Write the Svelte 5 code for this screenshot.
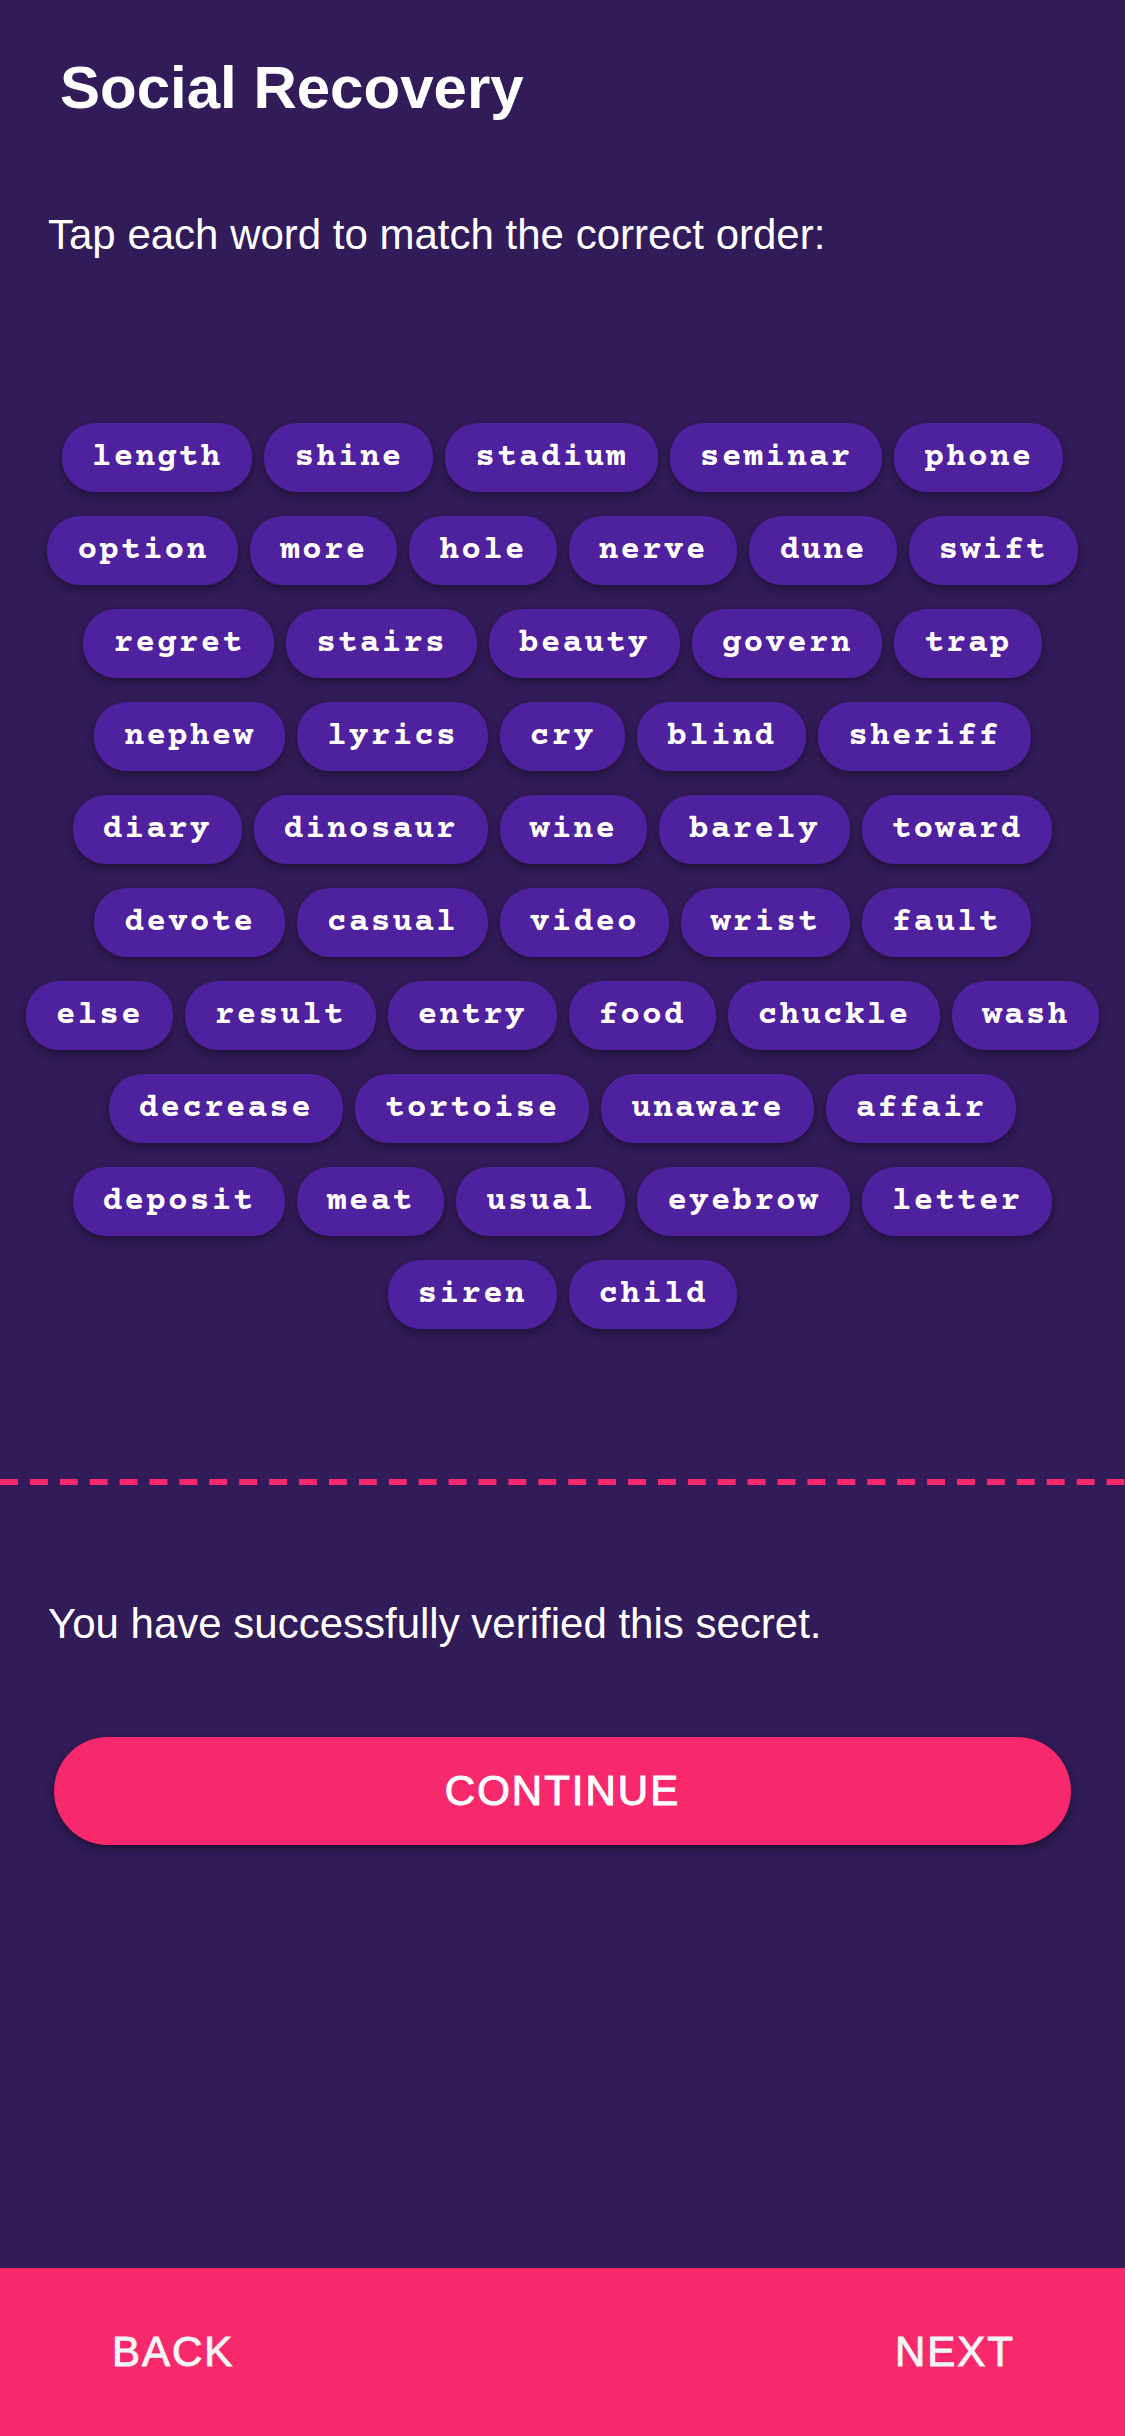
<script>
  const words = (
    'length shine stadium seminar phone option more hole nerve dune swift ' +
    'regret stairs beauty govern trap nephew lyrics cry blind sheriff ' +
    'diary dinosaur wine barely toward devote casual video wrist fault ' +
    'else result entry food chuckle wash decrease tortoise unaware affair ' +
    'deposit meat usual eyebrow letter siren child'
  ).split(' ');
</script>

<div class="screen">
  <header>
    <h1>Social Recovery</h1>
  </header>

  <main>
    <p>Tap each word to match the correct order:</p>

    <div class="words">
      {#each words as word}
        <button type="button" class="word">{word}</button>
      {/each}
    </div>

    <div class="divider" role="separator"></div>

    <p>You have successfully verified this secret.</p>

    <button type="button" class="continue">CONTINUE</button>
  </main>

  <footer>
    <button type="button" class="nav">BACK</button>
    <button type="button" class="nav">NEXT</button>
  </footer>
</div>

<style>
  :global(body) {
    margin: 0;
    background: #311b58;
  }

  .screen {
    display: flex;
    flex-direction: column;
    min-height: 100vh;
    background: #311b58;
    color: #fff;
    font-family: 'Helvetica Neue', 'Liberation Sans', Arial, sans-serif;
  }

  header {
    padding: 48px 60px 47px;
  }

  h1 {
    margin: 0;
    font-size: 60px;
    line-height: 80px;
    font-weight: 700;
  }

  main {
    flex: 1;
    display: flex;
    flex-direction: column;
  }

  p {
    margin: 0;
    padding: 36px 48px;
    font-size: 42px;
    line-height: 48px;
  }

  button {
    margin: 0;
    border: 0;
    color: inherit;
    font-family: inherit;
    cursor: pointer;
  }

  .words {
    display: flex;
    flex-wrap: wrap;
    justify-content: center;
    gap: 24px 12px;
    padding: 128px 22px 150px;
  }

  .word {
    height: 69px;
    padding: 0 30px;
    border-radius: 33px;
    background: #50219e;
    box-shadow: 0 4px 8px rgba(0, 0, 0, 0.36);
    font-family: 'Courier Prime', 'Nimbus Mono PS', 'Liberation Mono', monospace;
    font-size: 33px;
    line-height: 36px;
    font-weight: 700;
    letter-spacing: 2px;
  }

  .divider {
    height: 6px;
    margin-bottom: 79px;
    background: linear-gradient(90deg, #f7286c 18px, transparent 18px) 0 0 /
      calc((100% - 18px) / 37) 6px repeat-x;
  }

  .continue {
    height: 108px;
    margin: 53px 54px 48px;
    border-radius: 54px;
    background: #f7286c;
    box-shadow: 0 4px 10px rgba(0, 0, 0, 0.4);
    font-size: 42px;
    line-height: 48px;
    letter-spacing: 2px;
    -webkit-text-stroke: 1px currentColor;
  }

  footer {
    display: flex;
    justify-content: space-between;
    align-items: center;
    height: 168px;
    padding: 0 88px 0 90px;
    background: #f7286c;
  }

  .nav {
    padding: 24px 22px;
    background: none;
    color: #f4f4f4;
    font-size: 42px;
    line-height: 48px;
    letter-spacing: 2px;
    -webkit-text-stroke: 1px currentColor;
  }
</style>
